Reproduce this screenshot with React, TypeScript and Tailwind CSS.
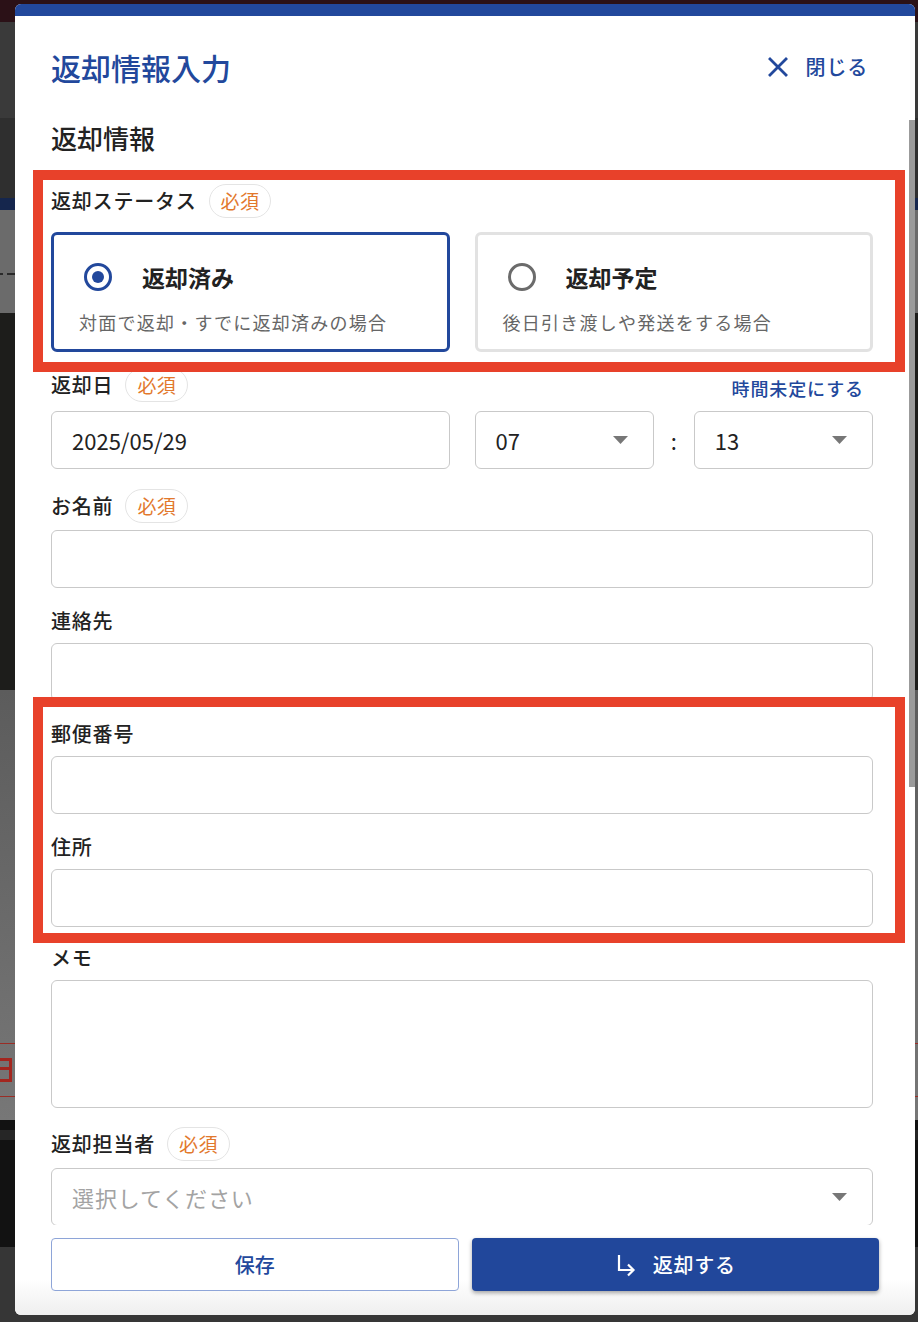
import React from "react";

const FONT = "font-['Noto_Sans_CJK_JP','Noto_Sans',sans-serif]";

function Badge() {
  return (
    <span className="ml-[12px] inline-flex h-[34px] items-center rounded-full border border-[#e4e4e4] px-[11px] text-[19px] font-normal tracking-[0.02em] text-[#e2782c]">
      必須
    </span>
  );
}

function Label({ text, required, className = "" }: { text: string; required?: boolean; className?: string }) {
  return (
    <div className={`flex h-[34px] items-center text-[20px] font-medium tracking-[0.04em] text-[#222] ${className}`}>
      <span>{text}</span>
      {required && <Badge />}
    </div>
  );
}

function Caret() {
  return (
    <svg width="15" height="8" viewBox="0 0 15 8" aria-hidden>
      <path d="M0 0h15L7.5 8z" fill="#777" />
    </svg>
  );
}

function TextBox({ value, className = "" }: { value?: string; className?: string }) {
  return (
    <div
      className={`flex h-[58px] items-center rounded-[6px] border border-[#c9c9c9] bg-white pl-[20px] text-[22px] text-[#222] ${className}`}
    >
      {value}
    </div>
  );
}

function SelectBox({ value, placeholder }: { value?: string; placeholder?: string }) {
  return (
    <div className="flex h-[58px] flex-1 items-center justify-between rounded-[6px] border border-[#c9c9c9] bg-white pl-[20px] pr-[25px] text-[22px]">
      {value ? (
        <span className="text-[#222]">{value}</span>
      ) : (
        <span className="tracking-[0.04em] text-[#a3a3a3]">{placeholder}</span>
      )}
      <Caret />
    </div>
  );
}

function RadioCard({
  title,
  desc,
  selected,
}: {
  title: string;
  desc: string;
  selected?: boolean;
}) {
  return (
    <div
      className={`flex h-[120px] flex-col rounded-[6px] border-[3px] pl-[25px] pt-[28px] ${
        selected ? "border-[#22489c]" : "border-[#e2e2e2]"
      }`}
    >
      <div className="flex h-[28px] items-center">
        <span
          className={`ml-[5px] flex h-[28px] w-[28px] items-center justify-center rounded-full border-[3px] ${
            selected ? "border-[#22489c]" : "border-[#6b6b6b]"
          }`}
        >
          {selected && <span className="h-[12px] w-[12px] rounded-full bg-[#22489c]" />}
        </span>
        <span className="ml-[30px] text-[23px] font-bold text-[#222]">{title}</span>
      </div>
      <div className="mt-[18px] text-[18px] leading-[26px] tracking-[0.07em] text-[#666]">{desc}</div>
    </div>
  );
}

function CloseIcon() {
  return (
    <svg width="20" height="20" viewBox="0 0 20 20" aria-hidden>
      <path d="M2 2l16 16M18 2L2 18" stroke="#22489c" strokeWidth="2.8" strokeLinecap="square" />
    </svg>
  );
}

function ReturnIcon() {
  return (
    <svg width="22" height="24" viewBox="0 0 22 24" aria-hidden>
      <path d="M4 2v15h14" stroke="white" strokeWidth="2.2" fill="none" />
      <path d="M13 11.5l5.5 5.5-5.5 5.5" stroke="white" strokeWidth="2.2" fill="none" />
    </svg>
  );
}

function Backdrop() {
  return (
    <div className="flex h-full w-full flex-col">
      <div className="h-[22px] bg-[#2b1117]" />
      <div className="h-[96px] bg-[#3a3a3a]" />
      <div className="h-[80px] bg-[#2f2f2f]" />
      <div className="h-[12px] bg-[#15264d]" />
      <div className="flex h-[103px] flex-col bg-[#6b6b6b] pt-[63px]">
        <div className="flex gap-[4px]">
          <div className="h-[2px] w-[3px] bg-[#2a2a2a]" />
          <div className="h-[2px] w-[8px] bg-[#2a2a2a]" />
        </div>
      </div>
      <div className="h-[377px] bg-[#1d1d1b]" />
      <div className="flex h-[430px] flex-col bg-gradient-to-b from-[#5c5c5c] to-[#777]">
        <div className="h-[353px]" />
        <div className="flex h-[54px] items-center border-y border-[#9a2d26]">
          {/* partly hidden red icon of the page behind */}
          <div className="flex h-[24px] w-[12px] flex-col justify-between border-y-[3px] border-r-[3px] border-[#a3261f]">
            <div className="mt-[6px] h-[3px] w-[9px] bg-[#a3261f]" />
          </div>
        </div>
      </div>
      <div className="flex h-[127px] flex-col bg-[#121212]">
        <div className="mt-[10px] h-[10px] bg-[#262626]" />
      </div>
      <div className="flex-1 bg-[#363636]" />
    </div>
  );
}

export default function App() {
  return (
    <div className={`relative h-[1322px] w-[918px] overflow-hidden ${FONT}`}>
      <Backdrop />

      {/* dialog */}
      <div className="absolute left-[15px] top-[4px] flex h-[1311px] w-[900px] flex-col overflow-hidden rounded-[6px] bg-white">
        <div className="h-[12px] shrink-0 bg-[#22489c]" />

        <header className="flex h-[102px] shrink-0 items-center justify-between px-[36px]">
          <h1 className="text-[30px] font-medium text-[#22489c]">返却情報入力</h1>
          <button className="mr-[11px] flex items-center text-[20px] font-medium tracking-[0.04em] text-[#22489c]">
            <CloseIcon />
            <span className="ml-[18px]">閉じる</span>
          </button>
        </header>

        <div className="relative min-h-0 flex-1 overflow-hidden">
          <div className="flex flex-col pl-[36px] pr-[42px]">
            <div className="flex h-[39px] items-center text-[26px] font-medium text-[#222]">返却情報</div>

            <Label text="返却ステータス" required className="mt-[27px]" />
            <div className="mt-[14px] grid grid-cols-2 gap-[25px]">
              <RadioCard title="返却済み" desc="対面で返却・すでに返却済みの場合" selected />
              <RadioCard title="返却予定" desc="後日引き渡しや発送をする場合" />
            </div>

            <div className="mt-[16px] flex items-center justify-between">
              <Label text="返却日" required />
              <button className="mr-[9px] mt-[6px] text-[18px] font-medium tracking-[0.05em] text-[#22489c]">
                時間未定にする
              </button>
            </div>
            <div className="mt-[9px] grid grid-cols-2 gap-[25px]">
              <TextBox value="2025/05/29" />
              <div className="flex items-center">
                <SelectBox value="07" />
                <span className="w-[40px] text-center text-[22px] text-[#222]">:</span>
                <SelectBox value="13" />
              </div>
            </div>

            <Label text="お名前" required className="mt-[20px]" />
            <TextBox className="mt-[7px]" />

            <Label text="連絡先" className="mt-[16px]" />
            <TextBox className="mt-[5px]" />

            <Label text="郵便番号" className="mt-[16px]" />
            <TextBox className="mt-[5px]" />

            <Label text="住所" className="mt-[16px]" />
            <TextBox className="mt-[5px]" />

            <Label text="メモ" className="mt-[14px]" />
            <div className="mt-[5px] h-[128px] rounded-[6px] border border-[#c9c9c9]" />

            <Label text="返却担当者" required className="mt-[19px]" />
            <div className="mt-[7px] flex">
              <SelectBox placeholder="選択してください" />
            </div>
          </div>

          {/* scrollbar thumb */}
          <div className="absolute right-0 top-[2px] h-[667px] w-[6px] bg-[#9b9b9b]" />
        </div>

        <footer className="grid h-[90px] shrink-0 grid-cols-2 gap-[13px] bg-gradient-to-b from-white from-60% to-[#efefef] px-[36px] pt-[13px]">
          <button className="h-[53px] rounded-[4px] border border-[#8ea5d8] bg-white text-[20px] font-medium text-[#22489c]">
            保存
          </button>
          <button className="flex h-[53px] items-center justify-center rounded-[4px] bg-[#21479b] text-[20px] font-medium tracking-[0.04em] text-white shadow-[0_2px_4px_rgba(0,0,0,0.35)]">
            <ReturnIcon />
            <span className="ml-[16px]">返却する</span>
          </button>
        </footer>
      </div>

      {/* highlight frames */}
      <div className="absolute left-[33px] top-[170px] h-[202px] w-[872px] border-[10px] border-[#e8412a]" />
      <div className="absolute left-[33px] top-[697px] h-[246px] w-[872px] border-[10px] border-[#e8412a]" />
    </div>
  );
}
